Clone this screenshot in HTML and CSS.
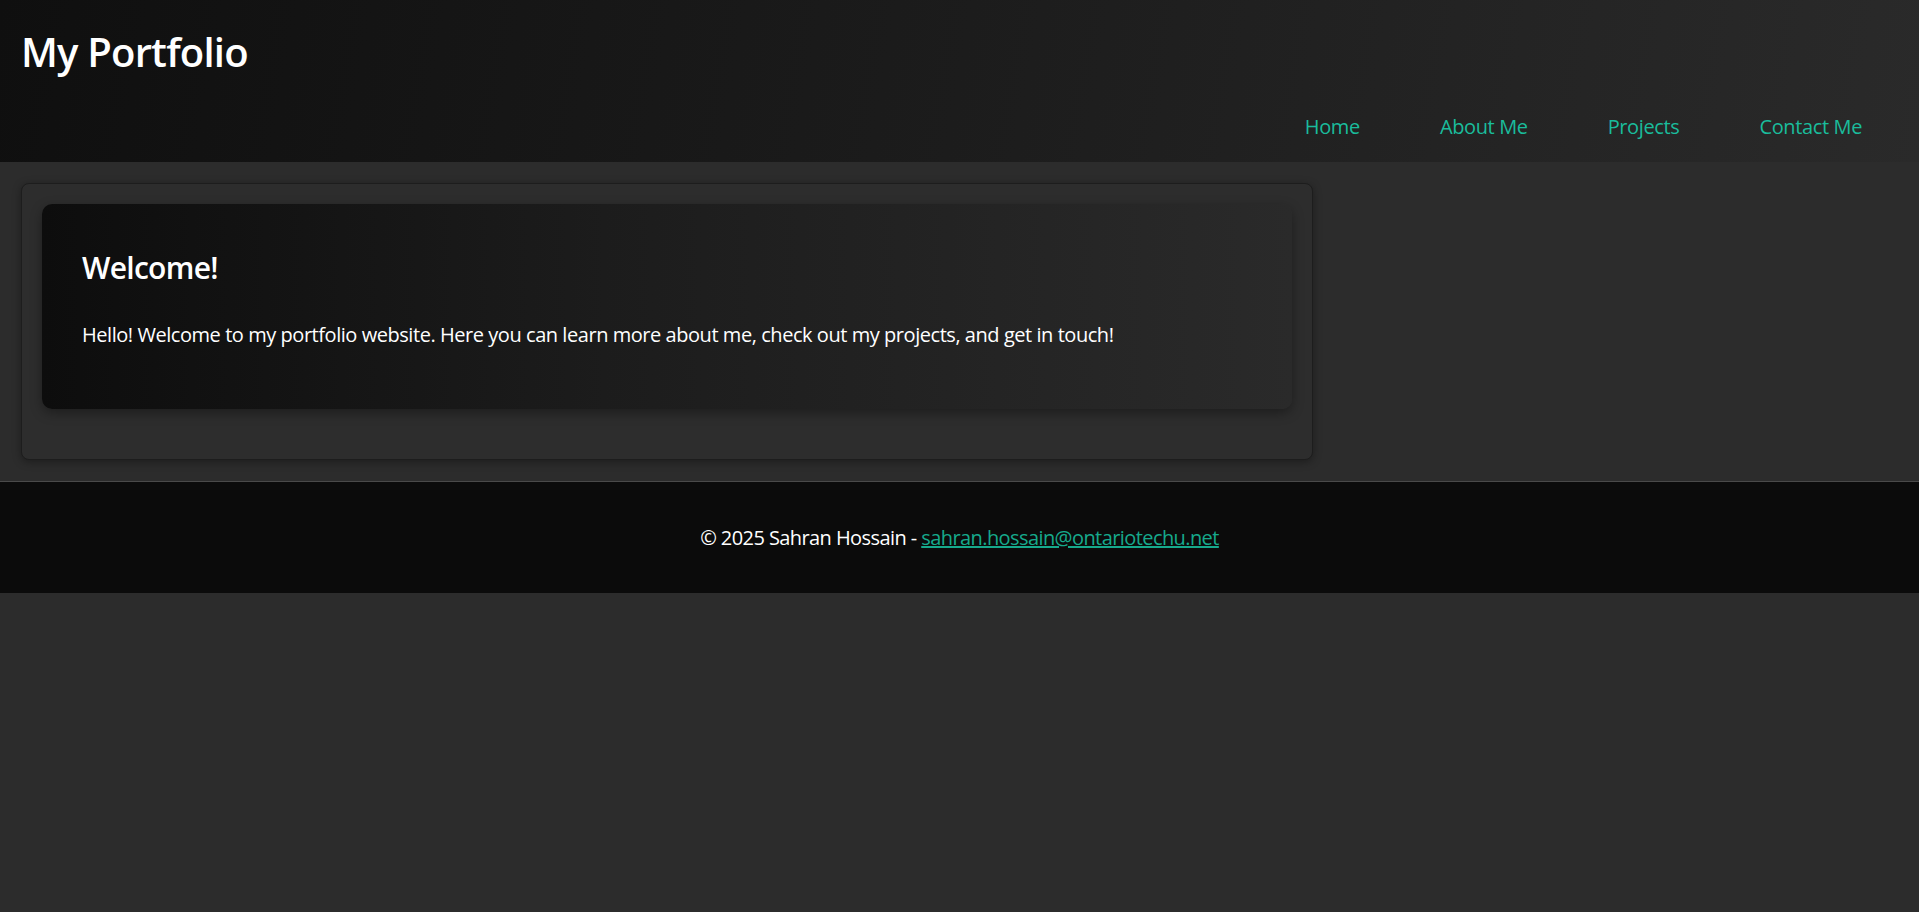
FILE: index.html
```html
<!DOCTYPE html>
<html lang="en">
<head>
<meta charset="utf-8">
<title>My Portfolio</title>
<link rel="stylesheet" href="styles.css">
</head>
<body>
<header class="site-header">
  <h1 class="site-title">My Portfolio</h1>
  <nav class="site-nav">
    <ul class="nav-list">
      <li><a class="nav-link" href="#">Home</a></li>
      <li><a class="nav-link" href="#">About Me</a></li>
      <li><a class="nav-link" href="#">Projects</a></li>
      <li><a class="nav-link" href="#">Contact Me</a></li>
    </ul>
  </nav>
</header>
<main class="site-main">
  <section class="panel">
    <article class="card">
      <h2 class="card-title">Welcome!</h2>
      <p class="card-text">Hello! Welcome to my portfolio website. Here you can learn more about me, check out my projects, and get in touch!</p>
    </article>
  </section>
</main>
<footer class="site-footer">
  <p class="footer-text">© 2025 Sahran Hossain - <a class="footer-link" href="#">sahran.hossain@ontariotechu.net</a></p>
</footer>
</body>
</html>
```

FILE: styles.css
```css
html, body {
  margin: 0;
  padding: 0;
}
body {
  background: #2c2c2c;
  color: #ffffff;
  font-family: "Open Sans", "Noto Sans", sans-serif;
  font-size: 20px;
  min-height: 912px;
}
.site-header {
  background: linear-gradient(100deg, #0f0f0f 0%, #1c1c1c 50%, #2a2a2a 100%);
  padding: 24px 57px 22px 21px;
}
.site-title {
  margin: 0 0 34px;
  font-size: 40px;
  font-weight: 600;
  letter-spacing: -0.8px;
  line-height: normal;
}
.nav-list {
  list-style: none;
  margin: 0;
  padding: 0;
  display: flex;
  justify-content: flex-end;
  gap: 80px;
}
.nav-link {
  color: #1abc9c;
  text-decoration: none;
  font-size: 20px;
  letter-spacing: -0.37px;
}
.site-main {
  padding: 21px;
}
.panel {
  width: 1292px;
  box-sizing: border-box;
  background: #2d2d2d;
  border: 1px solid #1d1d1d;
  border-radius: 8px;
  padding: 20px 20px 50px;
  box-shadow: 0 2px 8px rgba(0, 0, 0, 0.35);
}
.card {
  background: linear-gradient(90deg, #0d0d0d 0%, #1c1c1c 45%, #2a2a2a 100%);
  border-radius: 10px;
  padding: 40px;
  box-shadow: 0 4px 12px rgba(0, 0, 0, 0.35);
}
.card-title {
  margin: 3px 0 33px;
  font-size: 30px;
  font-weight: 600;
  letter-spacing: -0.7px;
}
.card-text {
  margin: 0 0 21px;
  font-size: 20px;
  letter-spacing: -0.45px;
}
.site-footer {
  background: #0b0b0b;
  border-top: 1px solid #4a4a4a;
  padding: 42px 20px;
  text-align: center;
}
.footer-text {
  margin: 0;
  font-size: 20px;
  letter-spacing: -0.58px;
}
.footer-link {
  color: #16a98c;
  text-decoration: underline;
}
```
